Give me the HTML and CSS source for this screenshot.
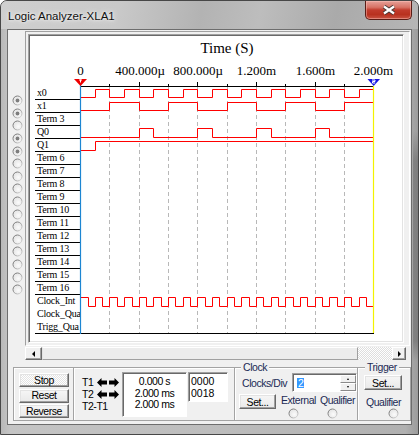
FILE: index.html
```html
<!DOCTYPE html>
<html>
<head>
<meta charset="utf-8">
<title>Logic Analyzer-XLA1</title>
<link rel="stylesheet" href="styles.css">
</head>
<body>
<svg class="defs" width="0" height="0">
  <defs>
    <linearGradient id="rstroke" x1="0" y1="0" x2="1" y2="1">
      <stop offset="0" stop-color="#6a6a6a"/>
      <stop offset="0.5" stop-color="#9a9a9a"/>
      <stop offset="1" stop-color="#e2e2e2"/>
    </linearGradient>
    <radialGradient id="rfill" cx="0.6" cy="0.6" r="0.6">
      <stop offset="0" stop-color="#fbfbfb"/>
      <stop offset="1" stop-color="#e4e4e4"/>
    </radialGradient>
  </defs>
</svg>
<div class="window">
  <div class="titlebar">
    <span class="title">Logic Analyzer-XLA1</span>
    <button class="close" aria-label="Close">
      <svg width="14" height="10" viewBox="0 0 14 10">
        <path class="x-out" d="M2 1.5L12 8.5M12 1.5L2 8.5"/>
        <path class="x-in" d="M2 1.5L12 8.5M12 1.5L2 8.5"/>
      </svg>
    </button>
  </div>
  <div class="client">
    <div class="top">
      <div class="radios">
        <span class="rd"><svg class="radio" viewBox="0 0 11 11"><circle class="rc" cx="5.5" cy="5.5" r="4.5"/><circle class="rdot" cx="5.5" cy="5.5" r="1.9"/></svg></span>
        <span class="rd"><svg class="radio" viewBox="0 0 11 11"><circle class="rc" cx="5.5" cy="5.5" r="4.5"/><circle class="rdot" cx="5.5" cy="5.5" r="1.9"/></svg></span>
        <span class="rd"><svg class="radio" viewBox="0 0 11 11"><circle class="rc" cx="5.5" cy="5.5" r="4.5"/></svg></span>
        <span class="rd"><svg class="radio" viewBox="0 0 11 11"><circle class="rc" cx="5.5" cy="5.5" r="4.5"/><circle class="rdot" cx="5.5" cy="5.5" r="1.9"/></svg></span>
        <span class="rd"><svg class="radio" viewBox="0 0 11 11"><circle class="rc" cx="5.5" cy="5.5" r="4.5"/><circle class="rdot" cx="5.5" cy="5.5" r="1.9"/></svg></span>
        <span class="rd"><svg class="radio" viewBox="0 0 11 11"><circle class="rc" cx="5.5" cy="5.5" r="4.5"/></svg></span>
        <span class="rd"><svg class="radio" viewBox="0 0 11 11"><circle class="rc" cx="5.5" cy="5.5" r="4.5"/></svg></span>
        <span class="rd"><svg class="radio" viewBox="0 0 11 11"><circle class="rc" cx="5.5" cy="5.5" r="4.5"/></svg></span>
        <span class="rd"><svg class="radio" viewBox="0 0 11 11"><circle class="rc" cx="5.5" cy="5.5" r="4.5"/></svg></span>
        <span class="rd"><svg class="radio" viewBox="0 0 11 11"><circle class="rc" cx="5.5" cy="5.5" r="4.5"/></svg></span>
        <span class="rd"><svg class="radio" viewBox="0 0 11 11"><circle class="rc" cx="5.5" cy="5.5" r="4.5"/></svg></span>
        <span class="rd"><svg class="radio" viewBox="0 0 11 11"><circle class="rc" cx="5.5" cy="5.5" r="4.5"/></svg></span>
        <span class="rd"><svg class="radio" viewBox="0 0 11 11"><circle class="rc" cx="5.5" cy="5.5" r="4.5"/></svg></span>
        <span class="rd"><svg class="radio" viewBox="0 0 11 11"><circle class="rc" cx="5.5" cy="5.5" r="4.5"/></svg></span>
        <span class="rd"><svg class="radio" viewBox="0 0 11 11"><circle class="rc" cx="5.5" cy="5.5" r="4.5"/></svg></span>
        <span class="rd"><svg class="radio" viewBox="0 0 11 11"><circle class="rc" cx="5.5" cy="5.5" r="4.5"/></svg></span>
      </div>
      <div class="scope">
        <div class="plot-frame">
          <div class="plot-white">
            <div class="labels">
              <div class="lrow">x0</div>
              <div class="lrow">x1</div>
              <div class="lrow">Term 3</div>
              <div class="lrow">Q0</div>
              <div class="lrow">Q1</div>
              <div class="lrow">Term 6</div>
              <div class="lrow">Term 7</div>
              <div class="lrow">Term 8</div>
              <div class="lrow">Term 9</div>
              <div class="lrow">Term 10</div>
              <div class="lrow">Term 11</div>
              <div class="lrow">Term 12</div>
              <div class="lrow">Term 13</div>
              <div class="lrow">Term 14</div>
              <div class="lrow">Term 15</div>
              <div class="lrow">Term 16</div>
              <div class="lrow nb">Clock_Int</div>
              <div class="lrow nb">Clock_Qua</div>
              <div class="lrow">Trigg_Qua</div>
            </div>
            <div class="plot">
              <div class="ptitle">Time (S)</div>
              <svg class="wave" width="300" height="280" viewBox="80 56 300 280">
                <g class="axlbl">
                  <text x="80.5" y="74">0</text>
                  <text x="140" y="74">400.000µ</text>
                  <text x="198" y="74">800.000µ</text>
                  <text x="256.5" y="74">1.200m</text>
                  <text x="315.5" y="74">1.600m</text>
                  <text x="373.5" y="74">2.000m</text>
                </g>
                <path class="grid" d="M109.5 86V332M139.5 86V332M168.5 86V332M197.5 86V332M227.5 86V332M256.5 86V332M285.5 86V332M315.5 86V332M344.5 86V332"/>
                <path class="axis" d="M80 85.5H374M139.5 81V85M197.5 81V85M256.5 81V85M315.5 81V85M109.5 83V85M168.5 83V85M227.5 83V85M285.5 83V85M344.5 83V85M80 332.5H374"/>
                <path class="sig" d="M80.5 96.5H95.5V88.5H109.5V96.5H124.5V88.5H139.5V96.5H153.5V88.5H168.5V96.5H183.5V88.5H197.5V96.5H212.5V88.5H227.5V96.5H241.5V88.5H256.5V96.5H271.5V88.5H285.5V96.5H300.5V88.5H315.5V96.5H329.5V88.5H344.5V96.5H359.5V88.5H373.5"/>
                <path class="sig" d="M80.5 109.5H109.5V101.5H139.5V109.5H168.5V101.5H197.5V109.5H227.5V101.5H256.5V109.5H285.5V101.5H315.5V109.5H344.5V101.5H373.5"/>
                <path class="sig" d="M80.5 136.5H139.5V127.5H153.5V136.5H197.5V127.5H212.5V136.5H256.5V127.5H271.5V136.5H315.5V127.5H329.5V136.5H373.5"/>
                <path class="sig" d="M80.5 149.5H95.5V140.5H373.5"/>
                <path class="sig" d="M80.5 296.5H88.5V305.5H95.5V296.5H102.5V305.5H109.5V296.5H117.5V305.5H124.5V296.5H132.5V305.5H139.5V296.5H146.5V305.5H153.5V296.5H161.5V305.5H168.5V296.5H175.5V305.5H183.5V296.5H190.5V305.5H197.5V296.5H205.5V305.5H212.5V296.5H219.5V305.5H227.5V296.5H234.5V305.5H241.5V296.5H249.5V305.5H256.5V296.5H263.5V305.5H271.5V296.5H278.5V305.5H285.5V296.5H293.5V305.5H300.5V296.5H307.5V305.5H315.5V296.5H322.5V305.5H329.5V296.5H337.5V305.5H344.5V296.5H351.5V305.5H359.5V296.5H366.5V305.5H373.5"/>
                <path class="t1line" d="M80.5 84V333"/>
                <path class="t2line" d="M373.5 85V332"/>
                <polygon class="t1" points="74,78 87,78 80.5,85"/>
                <path class="tmark" d="M80.5 78.5V81.5M79 79H82"/>
                <polygon class="t2" points="367.5,78 380,78 373.7,85"/>
                <path class="tmark" d="M372 79H375V80.5H372.5V82H375.2"/>
              </svg>
            </div>
          </div>
        </div>
        <div class="hscroll">
          <div class="sb-btn"><i class="arr-l"></i></div>
          <div class="sb-thumb"></div>
          <div class="sb-track"></div>
          <div class="sb-btn sb-right"><i class="arr-r"></i></div>
        </div>
      </div>
    </div>
    <div class="bottom">
      <div class="box btnbox">
        <button class="wbtn runbtn pressed">Stop</button>
        <button class="wbtn runbtn">Reset</button>
        <button class="wbtn runbtn">Reverse</button>
      </div>
      <div class="box cursors">
        <div class="tgrid">
          <span class="tl">T1</span>
          <span class="arrows">
            <i class="ab"><svg width="10" height="9" viewBox="0 0 10 9"><path d="M0 4.5L4.5 0V2.5H10V6.5H4.5V9Z"/></svg></i>
            <i class="ab"><svg width="10" height="9" viewBox="0 0 10 9"><path d="M10 4.5L5.5 0V2.5H0V6.5H5.5V9Z"/></svg></i>
          </span>
          <span class="tl">T2</span>
          <span class="arrows">
            <i class="ab"><svg width="10" height="9" viewBox="0 0 10 9"><path d="M0 4.5L4.5 0V2.5H10V6.5H4.5V9Z"/></svg></i>
            <i class="ab"><svg width="10" height="9" viewBox="0 0 10 9"><path d="M10 4.5L5.5 0V2.5H0V6.5H5.5V9Z"/></svg></i>
          </span>
          <span class="tl span2">T2-T1</span>
        </div>
        <div class="vals">
          <div>0.000 s</div>
          <div>2.000 ms</div>
          <div>2.000 ms</div>
        </div>
        <div class="counts">
          <div>0000</div>
          <div>0018</div>
        </div>
      </div>
      <div class="box group clock">
        <div class="gtitle">Clock</div>
        <div class="crow1">
          <span class="cdlbl">Clocks/Div</span>
          <div class="spin">
            <span class="sel">2</span>
            <div class="spinbtns"><i class="sp-up"></i><i class="sp-dn"></i></div>
          </div>
        </div>
        <div class="crow2">
          <button class="wbtn set">Set...</button>
          <div class="opt ext">
            <span class="optlbl">External</span>
            <svg class="radio oradio" viewBox="0 0 11 11"><circle class="rc" cx="5.5" cy="5.5" r="4.5"/></svg>
          </div>
          <div class="opt qual">
            <span class="optlbl">Qualifier</span>
            <svg class="radio oradio" viewBox="0 0 11 11"><circle class="rc" cx="5.5" cy="5.5" r="4.5"/></svg>
          </div>
        </div>
      </div>
      <div class="box group trigger">
        <div class="gtitle">Trigger</div>
        <button class="wbtn set tset">Set...</button>
        <span class="tqual">Qualifier</span>
        <svg class="radio tradio" viewBox="0 0 11 11"><circle class="rc" cx="5.5" cy="5.5" r="4.5"/></svg>
      </div>
    </div>
  </div>
</div>
</body>
</html>
```
FILE: styles.css
```css
html, body {
  margin: 0;
  padding: 0;
  background: #ffffff;
}
body {
  font-family: "Liberation Sans", Arial, sans-serif;
  color: #000;
}
.defs {
  display: block;
  width: 0;
  height: 0;
}
.window {
  width: 419px;
  height: 435px;
  box-sizing: border-box;
  border: 1px solid #474747;
  border-radius: 7px 7px 0 0;
  overflow: hidden;
  background:
    linear-gradient(180deg, rgba(0,0,0,0) 130px, rgba(70,70,70,0.35) 160px, rgba(70,70,70,0.35) 340px, rgba(0,0,0,0) 360px) right top / 5px 100% no-repeat,
    linear-gradient(90deg, #b8b8b8 0, #c4c4c4 2%, #bdbdbd 50%, #b0b0b0 97%, #9c9c9c 100%);
}
.titlebar {
  height: 28px;
  display: flex;
  align-items: flex-start;
  padding-left: 7px;
  background: linear-gradient(100deg, #cfcfcf 0%, #c9c9c9 28%, #b3b3b3 48%, #bdbdbd 62%, #aaaaaa 80%, #b6b6b6 100%);
}
.title {
  margin-top: 8px;
  font-size: 11.5px;
  line-height: 14px;
  color: #111;
  text-shadow: 0 0 6px #f4f4f4, 0 0 3px #ffffff;
}
.close {
  margin-left: auto;
  margin-right: 6px;
  width: 47px;
  height: 19px;
  padding: 0;
  box-sizing: border-box;
  border: 1px solid #5a1d16;
  border-top: none;
  border-radius: 0 0 5px 5px;
  background: linear-gradient(180deg, #e6a199 0%, #d77265 35%, #c13b2c 50%, #b8311f 75%, #c85343 100%);
  box-shadow: inset 0 0 0 1px rgba(255, 200, 190, 0.45);
  display: flex;
  align-items: center;
  justify-content: center;
}
.close svg {
  display: block;
}
.x-out {
  stroke: #4a3a38;
  stroke-width: 4.2;
  fill: none;
}
.x-in {
  stroke: #ffffff;
  stroke-width: 2.2;
  fill: none;
}
.client {
  margin: 0 6px;
  height: 396px;
  box-sizing: border-box;
  border: 1px solid #6d6d6d;
  background: #f0f0f0;
}
.top {
  display: flex;
  margin-top: 1px;
}
.radios {
  width: 17px;
  box-sizing: border-box;
  padding: 63.4px 0 0 4px;
  display: flex;
  flex-direction: column;
}
.rd {
  display: block;
  height: 12.6px;
}
.radio {
  display: block;
  width: 11px;
  height: 11px;
}
.rd .radio {
  margin-top: 0.8px;
}
.rc {
  fill: url(#rfill);
  stroke: url(#rstroke);
  stroke-width: 1;
}
.rdot {
  fill: #7d7d7d;
}
.scope {
  width: 386px;
}
.plot-frame {
  box-sizing: border-box;
  width: 385px;
  height: 315px;
  border: 1px solid;
  border-color: #a0a0a0 #ffffff #ffffff #a0a0a0;
  padding: 2px 5px 2px 2px;
}
.plot-white {
  box-sizing: border-box;
  height: 100%;
  border: 1px solid;
  border-color: #a0a0a0 #ffffff #ffffff #a0a0a0;
  box-shadow: inset 1px 1px 0 #696969, inset -1px -1px 0 #e3e3e3;
  background: #ffffff;
  display: flex;
  padding: 4px 0 0 6px;
}
.labels {
  width: 45px;
  padding-top: 48px;
  flex: none;
}
.lrow {
  height: 12px;
  line-height: 12px;
  border-bottom: 1px solid #000;
  padding-left: 2px;
  white-space: nowrap;
  overflow: hidden;
  font-family: "Liberation Serif", "Times New Roman", serif;
  font-size: 10px;
  letter-spacing: -0.2px;
}
.lrow.nb {
  border-bottom-color: transparent;
}
.plot {
  width: 300px;
  flex: none;
}
.ptitle {
  width: 294px;
  height: 18px;
  line-height: 18px;
  text-align: center;
  font-family: "Liberation Serif", "Times New Roman", serif;
  font-size: 15px;
}
.wave {
  display: block;
  overflow: visible;
}
.axlbl text {
  font-family: "Liberation Serif", "Times New Roman", serif;
  font-size: 13px;
  text-anchor: middle;
  fill: #000;
}
.axis {
  stroke: #000;
  stroke-width: 1;
  fill: none;
}
.grid {
  stroke: #b8b8b8;
  stroke-width: 1;
  stroke-dasharray: 4 3;
  fill: none;
}
.sig {
  stroke: #ff0000;
  stroke-width: 1;
  fill: none;
}
.t1line {
  stroke: #1d86d2;
  stroke-width: 1.2;
}
.t2line {
  stroke: #f2f200;
  stroke-width: 1.2;
}
.t1 {
  fill: #ee0000;
}
.t2 {
  fill: #1616e0;
}
.tmark {
  stroke: #ffffff;
  stroke-width: 1;
  fill: none;
}
.hscroll {
  display: flex;
  width: 381px;
  height: 13px;
  margin-top: 1px;
}
.sb-btn {
  width: 17px;
  flex: none;
  box-sizing: border-box;
  border: 1px solid;
  border-color: #ffffff #696969 #696969 #ffffff;
  box-shadow: inset -1px -1px 0 #a0a0a0;
  background: #f0f0f0;
  display: flex;
  align-items: center;
  justify-content: center;
}
.sb-right {
  width: 14px;
}
.arr-l {
  width: 0;
  height: 0;
  border-top: 3px solid transparent;
  border-bottom: 3px solid transparent;
  border-right: 3px solid #000;
}
.arr-r {
  width: 0;
  height: 0;
  border-top: 3px solid transparent;
  border-bottom: 3px solid transparent;
  border-left: 3px solid #000;
}
.sb-thumb {
  width: 316px;
  flex: none;
  box-sizing: border-box;
  border: 1px solid;
  border-color: #ffffff #a0a0a0 #a0a0a0 #e3e3e3;
  background: #ececec;
}
.sb-track {
  flex: 1;
  background-color: #ffffff;
  background-image: conic-gradient(#ffffff 25%, #dedede 0 50%, #ffffff 0 75%, #dedede 0);
  background-size: 2px 2px;
}
.bottom {
  display: flex;
  margin: 7px 0 0 5px;
  height: 54px;
  font-size: 10.5px;
  letter-spacing: -0.45px;
}
.box {
  box-sizing: border-box;
  height: 54px;
  border: 1px solid #a3a3a3;
  box-shadow: inset 1px 1px 0 #ffffff;
}
.btnbox {
  width: 61px;
  padding: 5px 0 0 5px;
  display: flex;
  flex-direction: column;
}
.wbtn {
  font: inherit;
  letter-spacing: inherit;
  color: #000;
  padding: 0;
  box-sizing: border-box;
  border: 1px solid;
  border-color: #ffffff #696969 #696969 #ffffff;
  box-shadow: inset -1px -1px 0 #a0a0a0, inset 1px 1px 0 #e3e3e3;
  background: linear-gradient(180deg, #f6f6f6, #e9e9e9);
}
.runbtn {
  width: 50px;
  height: 14px;
  line-height: 11px;
  margin-bottom: 1.5px;
}
.pressed {
  background-color: #ffffff;
  background-image: conic-gradient(#ffffff 25%, #e4e4e4 0 50%, #ffffff 0 75%, #e4e4e4 0);
  background-size: 2px 2px;
}
.cursors {
  width: 160px;
  border-left: none;
  border-right: none;
  display: flex;
  align-items: flex-start;
  padding: 4px 0 0 8px;
}
.tgrid {
  width: 40px;
  flex: none;
  padding-top: 4.7px;
  display: grid;
  grid-template-columns: 14px 24px;
  grid-auto-rows: 11.65px;
  align-items: center;
}
.tl {
  line-height: 11px;
}
.span2 {
  grid-column: 1 / 3;
  margin-top: 2px;
}
.arrows {
  display: flex;
  height: 11.65px;
}
.ab {
  width: 12px;
  display: flex;
  align-items: center;
  justify-content: center;
}
.ab svg {
  display: block;
  fill: #000;
}
.vals, .counts {
  box-sizing: border-box;
  background: #ffffff;
  border: 1px solid;
  border-color: #a0a0a0 #ffffff #ffffff #a0a0a0;
  box-shadow: inset 1px 1px 0 #696969;
  line-height: 11.7px;
}
.vals {
  width: 65px;
  height: 45px;
  padding-top: 3px;
  text-align: center;
}
.counts {
  width: 40px;
  height: 30px;
  margin-left: 1px;
  padding: 3px 0 0 2px;
  letter-spacing: 0;
}
.group {
  display: flex;
  flex-direction: column;
}
.gtitle {
  margin: -7px 0 0 6px;
  padding: 0 2px;
  width: fit-content;
  line-height: 12px;
  background: #f0f0f0;
  color: #1b2a55;
}
.clock {
  width: 124px;
}
.crow1 {
  display: flex;
  align-items: center;
}
.cdlbl {
  width: 57px;
  box-sizing: border-box;
  padding-left: 7px;
  flex: none;
  color: #1b2a55;
}
.spin {
  width: 65px;
  height: 19px;
  flex: none;
  box-sizing: border-box;
  border: 1px solid;
  border-color: #a0a0a0 #ffffff #ffffff #a0a0a0;
  box-shadow: inset 1px 1px 0 #696969;
  background: #ffffff;
  display: flex;
  align-items: center;
  padding: 1px 0 0 4px;
}
.sel {
  background: #3399ff;
  color: #ffffff;
  line-height: 10px;
  padding: 0 1px;
}
.spinbtns {
  margin-left: auto;
  width: 16px;
  height: 16px;
  align-self: flex-start;
  display: flex;
  flex-direction: column;
}
.spinbtns i {
  flex: 1;
  box-sizing: border-box;
  border: 1px solid;
  border-color: #ffffff #8a8a8a #8a8a8a #ffffff;
  background: #f0f0f0;
  display: flex;
  align-items: center;
  justify-content: center;
}
.sp-up::after {
  content: "";
  border-left: 1.5px solid transparent;
  border-right: 1.5px solid transparent;
  border-bottom: 2px solid #000;
}
.sp-dn::after {
  content: "";
  border-left: 1.5px solid transparent;
  border-right: 1.5px solid transparent;
  border-top: 2px solid #000;
}
.crow2 {
  display: flex;
  align-items: flex-start;
}
.set {
  width: 37px;
  height: 15px;
  line-height: 12px;
  margin: 2px 0 0 4px;
  flex: none;
}
.opt {
  display: flex;
  flex-direction: column;
  align-items: flex-start;
}
.ext {
  margin-left: 5px;
}
.qual {
  margin-left: 4px;
}
.optlbl {
  line-height: 12px;
  margin-top: 2px;
  color: #1b2a55;
  white-space: nowrap;
}
.oradio {
  margin: 2px 0 0 7px;
}
.trigger {
  width: 53px;
  border-left: none;
}
.trigger .gtitle {
  margin-left: 7px;
}
.tset {
  width: 38px;
  margin: 2px 0 0 6px;
}
.tqual {
  line-height: 12px;
  margin: 6px 0 0 8px;
  color: #1b2a55;
  white-space: nowrap;
}
.tradio {
  margin: 0 0 0 30px;
}
```
